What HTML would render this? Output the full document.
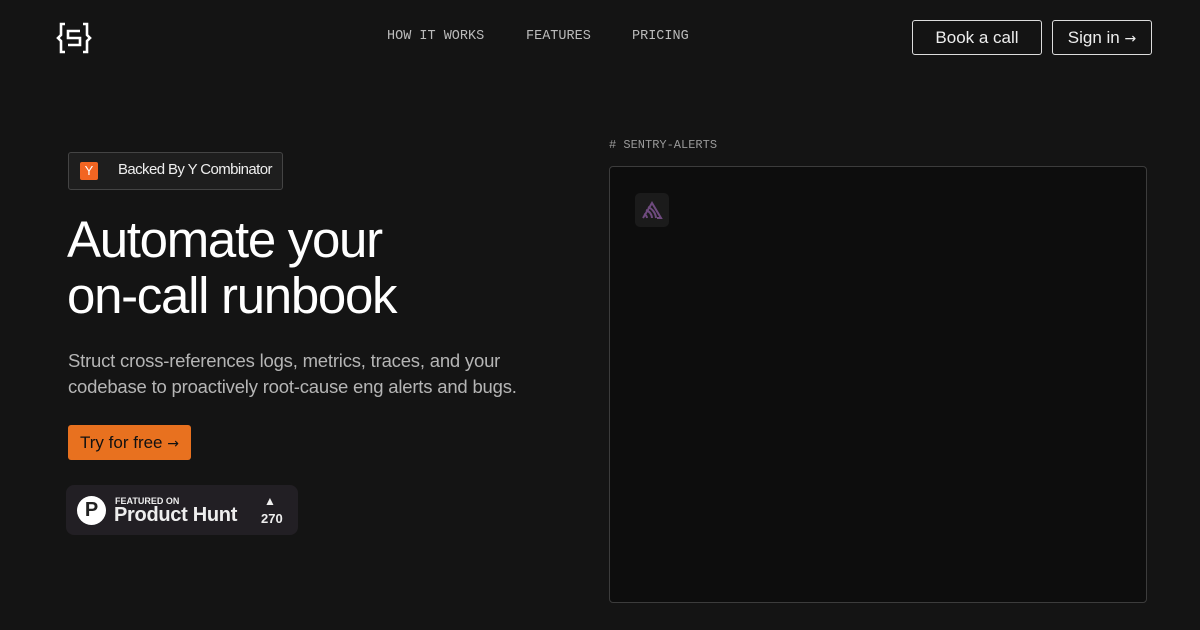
<!DOCTYPE html>
<html><head><meta charset="utf-8"><style>
*{margin:0;padding:0;box-sizing:border-box}
body{width:1200px;height:630px;background:#141414;font-family:"Liberation Sans",sans-serif;color:#fff;position:relative;overflow:hidden}
.a{position:absolute}
.nav{font-family:"Liberation Mono",monospace;font-size:13.5px;color:#bbb;top:29px;letter-spacing:0}
.btn{border:1px solid #ddd;border-radius:3px;font-size:17px;color:#eee;height:35px;top:20px;line-height:33px;text-align:center}
.ar{font-family:"DejaVu Sans",sans-serif;font-size:14px}
</style></head><body>
<svg class="a" style="left:56px;top:22px" width="36" height="32" viewBox="0 0 36 32" fill="none" stroke="#fff" stroke-width="2.6">
<path d="M9 2H5v11l-3 3l3 3v11h4"/><path d="M27 2h4v11l3 3l-3 3v11h-4"/>
<path d="M24 9H12v7h12v7H12"/></svg>
<div class="a nav" style="left:387px">HOW IT WORKS</div>
<div class="a nav" style="left:526px">FEATURES</div>
<div class="a nav" style="left:632px">PRICING</div>
<div class="a btn" style="left:912px;width:130px">Book a call</div>
<div class="a btn" style="left:1052px;width:100px">Sign in <span class="ar">→</span></div>

<div class="a" style="left:68px;top:152px;width:215px;height:38px;border:1px solid #444;border-radius:3px;background:#1e1e1e"></div>
<div class="a" style="left:80px;top:162px;width:18px;height:18px;background:#f26522;border-radius:2px;font-size:13px;text-align:center;line-height:18px">Y</div>
<div class="a" style="left:118px;top:161px;font-size:15px;color:#eee;letter-spacing:-0.6px">Backed By Y Combinator</div>

<div class="a" style="left:67px;top:212px;font-size:51px;line-height:56px;letter-spacing:-1.3px">Automate your<br>on-call runbook</div>
<div class="a" style="left:68px;top:348px;font-size:18.5px;line-height:26px;color:#b5b5b5;letter-spacing:-0.2px">Struct cross-references logs, metrics, traces, and your<br>codebase to proactively root-cause eng alerts and bugs.</div>
<div class="a" style="left:68px;top:425px;width:123px;height:35px;background:#e8711f;border-radius:3px;color:#111;font-size:17px;line-height:35px;text-align:center">Try for free <span class="ar">→</span></div>

<div class="a" style="left:66px;top:485px;width:232px;height:50px;background:#221f24;border-radius:8px"></div>
<div class="a" style="left:77px;top:496px;width:29px;height:29px;border-radius:50%;background:#fff;color:#222;font-weight:bold;font-size:20px;text-align:center;line-height:29px">P</div>
<div class="a" style="left:115px;top:496px;font-size:9px;font-weight:bold;color:#eee">FEATURED ON</div>
<div class="a" style="left:114px;top:504px;font-size:20px;font-weight:bold;color:#eee;letter-spacing:-0.3px">Product Hunt</div>
<div class="a" style="left:264px;top:494px;font-size:12px;color:#eee">▲</div>
<div class="a" style="left:261px;top:511px;font-size:13px;font-weight:bold;color:#eee">270</div>

<div class="a" style="left:609px;top:138px;font-family:'Liberation Mono',monospace;font-size:12px;color:#999">#&nbsp;SENTRY-ALERTS</div>
<div class="a" style="left:609px;top:166px;width:538px;height:437px;border:1px solid #3c3c3c;border-radius:4px;background:#0d0d0d"></div>
<div class="a" style="left:635px;top:193px;width:34px;height:34px;border-radius:5px;background:#1b1b1b"></div>
<svg class="a" style="left:641px;top:199px" width="22" height="22" viewBox="0 0 22 22" fill="none" stroke="#6e4a7e" stroke-width="2"><path d="M2 19l9-15l9 15h-4M6 19a5 5 0 0 0-3-4M11 19a9 9 0 0 0-6-8M15 19A13 13 0 0 0 7 8"/></svg>
</body></html>
